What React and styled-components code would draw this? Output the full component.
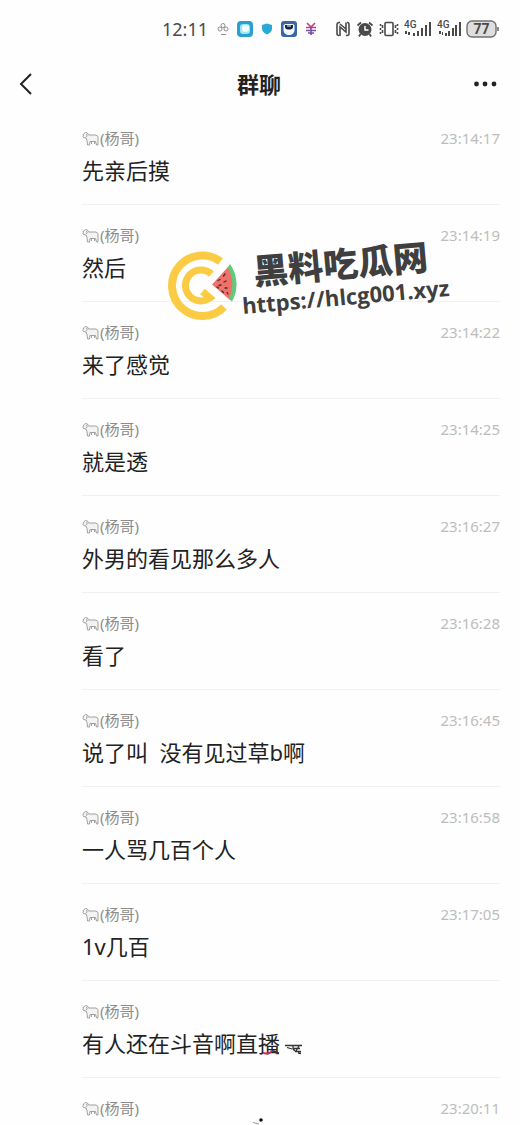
import React from 'react';
import styled, { createGlobalStyle } from 'styled-components';

const COLORS = {
  page: '#fefefe',
  text: '#222222',
  name: '#8c8c8c',
  time: '#bdbdbd',
  line: '#f1f1f1',
  status: '#4a4a4a',
  brand: '#fbcb43',
  stamp: '#3f3f3f'
};

const GlobalStyle = createGlobalStyle`
  * {
    box-sizing: border-box;
  }

  body {
    margin: 0;
    background: ${COLORS.page};
    color: ${COLORS.text};
    font-family: 'Noto Sans', 'Noto Sans CJK SC', sans-serif;
  }
`;

const Screen = styled.div`
  position: relative;
  display: flex;
  flex-direction: column;
  height: 100vh;
  overflow: hidden;
`;

const StatusBar = styled.div`
  display: flex;
  align-items: center;
  justify-content: flex-end;
  flex-shrink: 0;
  padding: 16px 20px 0 0;
  color: ${COLORS.status};
`;

const Clock = styled.span`
  font-size: 18px;
  line-height: 26px;
  margin-right: 9px;
`;

const StatusGroup = styled.div`
  display: flex;
  align-items: center;
  gap: ${({ $gap }) => $gap}px;
  margin-right: ${({ $end }) => $end || 0}px;

  svg {
    display: block;
  }
`;

const Header = styled.header`
  display: grid;
  grid-template-columns: 1fr auto 1fr;
  align-items: center;
  flex-shrink: 0;
  padding: 20px 18px 2px 16px;
  height: 66px;
`;

const IconButton = styled.button`
  display: flex;
  justify-self: ${({ $side }) => $side};
  padding: 0;
  border: none;
  background: none;
  color: ${COLORS.text};
  cursor: pointer;
`;

const Title = styled.h1`
  margin: 0;
  font-size: 22px;
  line-height: 32px;
  font-weight: 700;
`;

const MessageList = styled.ul`
  margin: 0;
  padding: 0 20px 0 82px;
  list-style: none;
`;

const Message = styled.li`
  display: flex;
  flex-direction: column;
  gap: 6px;
  padding: 20px 0 18px;
  border-bottom: 1px solid ${COLORS.line};
`;

const MessageMeta = styled.div`
  display: flex;
  align-items: center;
  justify-content: space-between;
  font-size: 15px;
  line-height: 20px;
`;

const Sender = styled.span`
  display: flex;
  align-items: center;
  gap: 1px;
  color: ${COLORS.name};
`;

const Time = styled.time`
  color: ${COLORS.time};
`;

const MessageText = styled.p`
  position: relative;
  align-self: flex-start;
  margin: 0;
  min-height: 32px;
  font-size: 22px;
  line-height: 32px;
  white-space: pre;
`;

const Scribble = styled.svg`
  position: absolute;
  left: ${({ $left }) => $left}px;
  top: ${({ $top }) => $top}px;
`;

const Watermark = styled.div`
  position: absolute;
  top: 244px;
  left: 166px;
  display: flex;
  align-items: flex-start;
  gap: 2px;
  color: ${COLORS.stamp};
  pointer-events: none;
`;

const LogoSlot = styled.div`
  display: flex;
  padding-top: 6px;
`;

const WatermarkText = styled.div`
  display: flex;
  flex-direction: column;
  transform: rotate(-5deg);
  white-space: nowrap;
  text-shadow: 0 0 2px #fff, 0 0 2px #fff;
`;

const WatermarkName = styled.span`
  padding-left: 14px;
  font-size: 35px;
  line-height: 40px;
  font-weight: 900;
`;

const WatermarkLink = styled.span`
  font-family: 'Open Sans', sans-serif;
  font-size: 22px;
  line-height: 24px;
  font-weight: 700;
`;

const messages = [
  { time: '23:14:17', text: '先亲后摸' },
  { time: '23:14:19', text: '然后' },
  { time: '23:14:22', text: '来了感觉' },
  { time: '23:14:25', text: '就是透' },
  { time: '23:16:27', text: '外男的看见那么多人' },
  { time: '23:16:28', text: '看了' },
  { time: '23:16:45', text: '说了叫  没有见过草b啊' },
  { time: '23:16:58', text: '一人骂几百个人' },
  { time: '23:17:05', text: '1v几百' },
  { time: '', text: '有人还在斗音啊直播', mark: 'tail' },
  { time: '23:20:11', text: '', mark: 'dot' }
];

const SheepIcon = () => (
  <svg width="17" height="16" viewBox="0 0 17 16" fill="none" stroke="#a0a0a0" strokeLinejoin="round">
    <path d="M1 6.500 1.500 4 3.500 2.500 5.500 3 6.500 5H14l2 1.500V15h-1.500l-1-3.500H8L7.500 15H5.500L5 10.500 4 8 1.500 7.500z" fill="#f3f3f3" />
    <path d="M4 4.500c1.500 0 1.500 2 0 2.500M9.500 11.500V14M12.500 11.500V14" />
  </svg>
);

const AppIcons = () => (
  <StatusGroup $gap={8} $end={18}>
    <svg width="12" height="14" viewBox="0 0 12 14" fill="none" stroke="#8f8f8f">
      <circle cx="6" cy="3.500" r="2" />
      <circle cx="3" cy="7" r="2" />
      <circle cx="9" cy="7" r="2" />
      <path d="M4 12.500h5" />
    </svg>
    <svg width="16" height="16" viewBox="0 0 16 16">
      <rect width="16" height="16" rx="4" fill="#2b9fcb" />
      <rect x="3" y="3" width="10" height="10" rx="3" fill="#9fe4f5" />
      <rect x="5" y="4" width="7" height="7" rx="3" fill="#effdff" />
    </svg>
    <svg width="12" height="12" viewBox="0 0 12 12">
      <path d="M6 0.500 11 2v4c0 2.500-2.500 4.500-5 5.500C3.500 10.500 1 8.500 1 6V2z" fill="#28a9d6" />
    </svg>
    <svg width="16" height="16" viewBox="0 0 16 16">
      <rect width="16" height="16" rx="3" fill="#3767a8" />
      <path d="M2.500 5c0-2 2-2 5.500-2s5.500 0 5.500 2v4c0 3-2.500 5-5.500 5s-5.500-2-5.500-5z" fill="#f4f8ff" />
      <path d="M4 4h8v2c0 2-2 2.500-4 2.500S4 8 4 6z" fill="#17233f" />
      <path d="M6 5h4" stroke="#fff" />
    </svg>
    <svg width="12" height="14" viewBox="0 0 12 14" fill="none" strokeWidth="1.600">
      <path d="M2 1l4 4 4-4M1 5.500h10" stroke="#c3427c" />
      <path d="M1 8.500h10M6 5v8M3 11h6" stroke="#7a4fa0" />
    </svg>
  </StatusGroup>
);

const Signal = ({ compact }) => (
  <svg width={compact ? 24 : 28} height="18" viewBox={compact ? '0 0 24 18' : '0 0 28 18'} fill="currentColor">
    <text x="0" y="8" fontSize="10" fontWeight="500" fontFamily="Roboto, sans-serif">4G</text>
    {compact ? (
      <path d="M2 11h2v3H2zM5 12h1v3H5zM8 13h2v3H8zM11 11h2v5h-2zM15 8h2v8h-2zM18 5h2v11h-2zM22 2h2v14h-2z" />
    ) : (
      <path d="M1 11h2v3H1zM4 12h2v3H4zM9 13h2v3H9zM13 11h2v5h-2zM17 8h2v8h-2zM21 5h2v11h-2zM25 2h2v14h-2z" />
    )}
  </svg>
);

const SystemIcons = () => (
  <StatusGroup $gap={5}>
    <svg width="16" height="16" viewBox="0 0 16 16" fill="none" stroke="currentColor" strokeWidth="1.600">
      <path d="M5 1.500H4a2 2 0 0 0-2 2v9a2 2 0 0 0 2 2M11 14.500h1a2 2 0 0 0 2-2v-9a2 2 0 0 0-2-2" />
      <path d="M5 15V6l6 5V1.500M5 3l6 5" />
    </svg>
    <svg width="18" height="16" viewBox="0 0 18 16">
      <circle cx="9" cy="8.500" r="6.500" fill="currentColor" />
      <path d="M1.500 4.500 5 1.500M16.500 4.500 13 1.500M4.500 13 3 15.500M13.500 13l1.500 2.500" stroke="currentColor" strokeWidth="1.800" />
      <path d="M9 5v4h3.500" stroke="#fff" strokeWidth="1.500" fill="none" />
    </svg>
    <svg width="20" height="16" viewBox="0 0 20 16" fill="none" stroke="currentColor" strokeWidth="1.600">
      <rect x="6" y="1.500" width="8" height="13" rx="1" />
      <path d="M3.500 4v3M3.500 9v3M1.500 3v2M1.500 7v2M1.500 11v2M16.500 4v3M16.500 9v3M18.500 3v2M18.500 7v2M18.500 11v2" />
    </svg>
    <Signal />
    <Signal compact />
    <svg width="34" height="18" viewBox="0 0 34 18">
      <rect x="1" y="1" width="29" height="16" rx="5" fill="#dedede" stroke="#707070" strokeWidth="1.400" />
      <path d="M32 7v4" stroke="#707070" strokeWidth="1.600" />
      <text x="15.500" y="14" textAnchor="middle" fontSize="14" fontWeight="700" fontFamily="Roboto, sans-serif" fill="#4a4a4a">77</text>
    </svg>
  </StatusGroup>
);

const Logo = () => (
  <svg width="72" height="72" viewBox="0 0 72 72" fill="none">
    <path d="M54.500 11.500A30.300 30.300 0 1 0 58 57" stroke={COLORS.brand} strokeWidth="8" />
    <path d="M45.500 24A15.500 15.500 0 1 0 44 48L36.500 41.500" stroke={COLORS.brand} strokeWidth="7" strokeLinejoin="miter" />
    <path d="M62 17 46 34.500 64 50A33 33 0 0 0 62 17z" fill="#f0716b" />
    <path d="M64 14A35 35 0 0 1 66 51.500L63 49A33 33 0 0 0 61.500 17.500z" fill="#62c979" />
    <path
      d="M59 24l-1.500 2M54 29.500l-2 1M60 31l-2 1M55 35l-2 .5M61 38h-2M51 37l1.500 1M56 41l1.500 1.500M62 44l-1-1.500"
      stroke="#40302c"
      strokeWidth="1.300"
      strokeLinecap="round"
    />
  </svg>
);

const marks = {
  tail: (
    <>
      <Scribble $left={180} $top={20} width="20" height="10" viewBox="0 0 20 10" fill="none">
        <path d="M1 5.500c3 2 7 1 9-1.500" stroke="#c62850" strokeWidth="2" />
        <path d="M11 4l6 2.500" stroke="#333" strokeWidth="2" />
      </Scribble>
      <Scribble $left={203} $top={16} width="18" height="12" viewBox="0 0 18 12" fill="none">
        <path d="M0 2.500h17M2 4.500l5 1.500M8 3v3l2 2M8 5.500h7M14 3l-3 5M10 8.500h6M13 10l3 .5" stroke="#333" strokeWidth="1.300" />
      </Scribble>
    </>
  ),
  dot: (
    <Scribble $left={170} $top={-7} width="14" height="10" viewBox="0 0 14 10">
      <circle cx="9" cy="3" r="1.800" fill="#111" />
      <path d="M1 5.500l6 1.500" stroke="#999" />
    </Scribble>
  )
};

const App = () => (
  <>
    <GlobalStyle />
    <Screen>
      <StatusBar>
        <Clock>12:11</Clock>
        <AppIcons />
        <SystemIcons />
      </StatusBar>
      <Header>
        <IconButton $side="start" aria-label="返回">
          <svg width="20" height="24" viewBox="0 0 20 24" fill="none" stroke="currentColor" strokeWidth="2">
            <path d="M15 2 5 12l10 10" />
          </svg>
        </IconButton>
        <Title>群聊</Title>
        <IconButton $side="end" aria-label="更多">
          <svg width="28" height="24" viewBox="0 0 28 24" fill="currentColor">
            <circle cx="1.500" cy="12" r="2.400" transform="translate(1 0)" />
            <circle cx="11" cy="12" r="2.400" />
            <circle cx="20" cy="12" r="2.400" />
          </svg>
        </IconButton>
      </Header>
      <MessageList>
        {messages.map(({ time, text, mark }) => (
          <Message key={time + text}>
            <MessageMeta>
              <Sender>
                <SheepIcon />
                (杨哥)
              </Sender>
              {time && <Time>{time}</Time>}
            </MessageMeta>
            <MessageText>
              {text}
              {mark && marks[mark]}
            </MessageText>
          </Message>
        ))}
      </MessageList>
      <Watermark>
        <LogoSlot>
          <Logo />
        </LogoSlot>
        <WatermarkText>
          <WatermarkName>黑料吃瓜网</WatermarkName>
          <WatermarkLink>https://hlcg001.xyz</WatermarkLink>
        </WatermarkText>
      </Watermark>
    </Screen>
  </>
);

export default App;
